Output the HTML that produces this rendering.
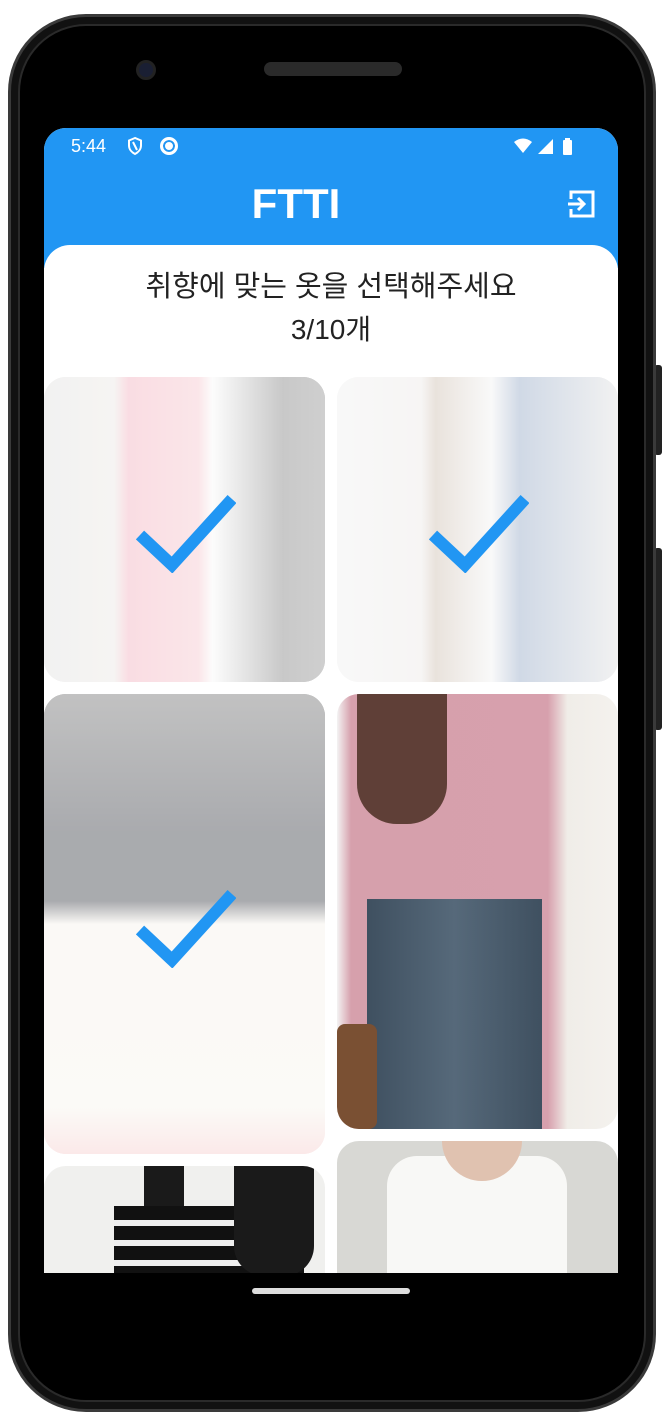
<!DOCTYPE html>
<html><head><meta charset="utf-8"><style>
*{margin:0;padding:0;box-sizing:border-box}
body{width:664px;height:1424px;background:#fff;position:relative;overflow:hidden;font-family:"Liberation Sans","Noto Sans CJK KR",sans-serif}
.abs{position:absolute}
.body{left:8px;top:14px;width:648px;height:1398px;background:#111;border-radius:78px;border:3px solid #3a3a3a}
.inner{left:18px;top:24px;width:628px;height:1378px;background:#000;border-radius:68px;border:2px solid #2a2a2a}
.screen{left:44px;top:128px;width:574px;height:1145px;background:#fff;border-radius:22px 22px 0 0;overflow:hidden}
.hdr{left:0;top:0;width:574px;height:140px;background:#2196F3}
.panel{left:0;top:117px;width:574px;height:1100px;background:#fff;border-radius:26px 26px 0 0}
.img{border-radius:22px;overflow:hidden}
.fade::after{content:"";position:absolute;inset:0;background:rgba(255,255,255,.6)}
.chk{position:absolute;width:100px;height:80px;z-index:2}
</style></head><body>
<div class="abs" style="left:654px;top:365px;width:8px;height:90px;background:#222;border-radius:3px"></div>
<div class="abs" style="left:654px;top:548px;width:8px;height:182px;background:#222;border-radius:3px"></div>
<div class="abs body"></div>
<div class="abs inner"></div>
<div class="abs" style="left:136px;top:60px;width:20px;height:20px;border-radius:50%;background:#1a1f33;border:3px solid #222"></div>
<div class="abs" style="left:264px;top:62px;width:138px;height:14px;border-radius:7px;background:#2a2a2a"></div>
<div class="abs screen">
 <div class="abs hdr"></div>
 <div class="abs" style="left:27px;top:8px;color:#fff;font-size:18px">5:44</div>
 <svg class="abs" style="left:82px;top:8px" width="18" height="20" viewBox="0 0 18 20"><path d="M9 2L3 4.5v5c0 4 3 7 6 8.5 3-1.5 6-4.5 6-8.5v-5z M7 6l4 8" fill="none" stroke="#fff" stroke-width="2"/></svg>
 <div class="abs" style="left:116px;top:9px;width:18px;height:18px;border-radius:50%;background:#fff;border:3px solid #fff;box-shadow:inset 0 0 0 2px #2196F3"></div>
 <svg class="abs" style="left:468px;top:8px" width="70" height="20" viewBox="0 0 70 20"><path d="M2 6Q11-1 20 6L11 17z" fill="#fff"/><path d="M41 3V18H26z" fill="#fff"/><rect x="51" y="4" width="9" height="15" rx="1" fill="#fff"/><rect x="53" y="2" width="5" height="3" fill="#fff"/></svg>
 <div class="abs" style="left:152px;width:200px;top:52px;text-align:center;color:#fff;font-size:42px;font-weight:bold">FTTI</div>
 <svg class="abs" style="left:522px;top:61px" width="30" height="30" viewBox="0 0 30 30"><path d="M5 10V3h22v24H5v-7" fill="none" stroke="#fff" stroke-width="3"/><path d="M2 15h16M12 9l6 6-6 6" fill="none" stroke="#fff" stroke-width="3"/></svg>
 <div class="abs panel"></div>
 <div class="abs" style="left:0;width:574px;top:135px;text-align:center;font-size:29px;color:#222">취향에 맞는 옷을 선택해주세요</div>
 <div class="abs" style="left:0;width:574px;top:180px;text-align:center;font-size:28px;color:#222">3/10개</div>

 <div class="abs img fade" style="left:0;top:249px;width:281px;height:305px;background:linear-gradient(90deg,#ddd 0,#e8e4e0 25%,#f1a9b8 30%,#f4c0c8 55%,#f8f8f8 60%,#777 85%,#888 100%)"></div>
 <div class="abs img fade" style="left:293px;top:249px;width:281px;height:305px;background:linear-gradient(90deg,#eee 0,#eae6e4 30%,#c8b8a8 35%,#f0f0f0 55%,#8aa0c0 65%,#ddd 100%)"></div>
 <div class="abs img fade" style="left:0;top:566px;width:281px;height:460px;background:linear-gradient(180deg,#666 0,#2a2d36 30%,#2a2d36 45%,#f4f0e8 50%,#f6f2ea 90%,#f4c8c8 100%)"></div>
 <div class="abs img" style="left:293px;top:566px;width:281px;height:435px;background:linear-gradient(90deg,#f3f3f3 0,#d6a0ac 5%,#d7a0ad 75%,#f0ede8 82%,#f4f2ee 100%)"><div class="abs" style="left:30px;top:205px;width:175px;height:230px;background:linear-gradient(90deg,#3f5060,#56697a,#3f5060)"></div><div class="abs" style="left:0;top:330px;width:40px;height:105px;background:#7a5033;border-radius:8px"></div><div class="abs" style="left:20px;top:0;width:90px;height:130px;background:#4a2e22;border-radius:0 0 40px 40px;opacity:.85"></div></div>
 <div class="abs img" style="left:0;top:1038px;width:281px;height:130px;background:#f0f0ee"><div class="abs" style="left:70px;top:40px;width:190px;height:90px;background:repeating-linear-gradient(180deg,#111 0 14px,#eee 14px 20px)"></div><div class="abs" style="left:190px;top:0;width:80px;height:110px;background:#1a1a1a;border-radius:0 0 30px 30px"></div><div class="abs" style="left:100px;top:0;width:40px;height:40px;background:#1a1a1a"></div></div>
 <div class="abs img" style="left:293px;top:1013px;width:281px;height:160px;background:#d8d8d4"><div class="abs" style="left:50px;top:15px;width:180px;height:150px;background:#f8f8f6;border-radius:30px 30px 0 0"></div><div class="abs" style="left:105px;top:0;width:80px;height:40px;background:#e0c2b0;border-radius:0 0 40px 40px"></div></div>

 <svg class="chk" style="left:92px;top:365px" viewBox="0 0 100 80"><path d="M4 42l32 30 60-66" fill="none" stroke="#2196F3" stroke-width="12"/></svg>
 <svg class="chk" style="left:385px;top:365px" viewBox="0 0 100 80"><path d="M4 42l32 30 60-66" fill="none" stroke="#2196F3" stroke-width="12"/></svg>
 <svg class="chk" style="left:92px;top:760px" viewBox="0 0 100 80"><path d="M4 42l32 30 60-66" fill="none" stroke="#2196F3" stroke-width="12"/></svg>
</div>
<div class="abs" style="left:252px;top:1288px;width:158px;height:6px;border-radius:3px;background:#ddd"></div>
</body></html>
